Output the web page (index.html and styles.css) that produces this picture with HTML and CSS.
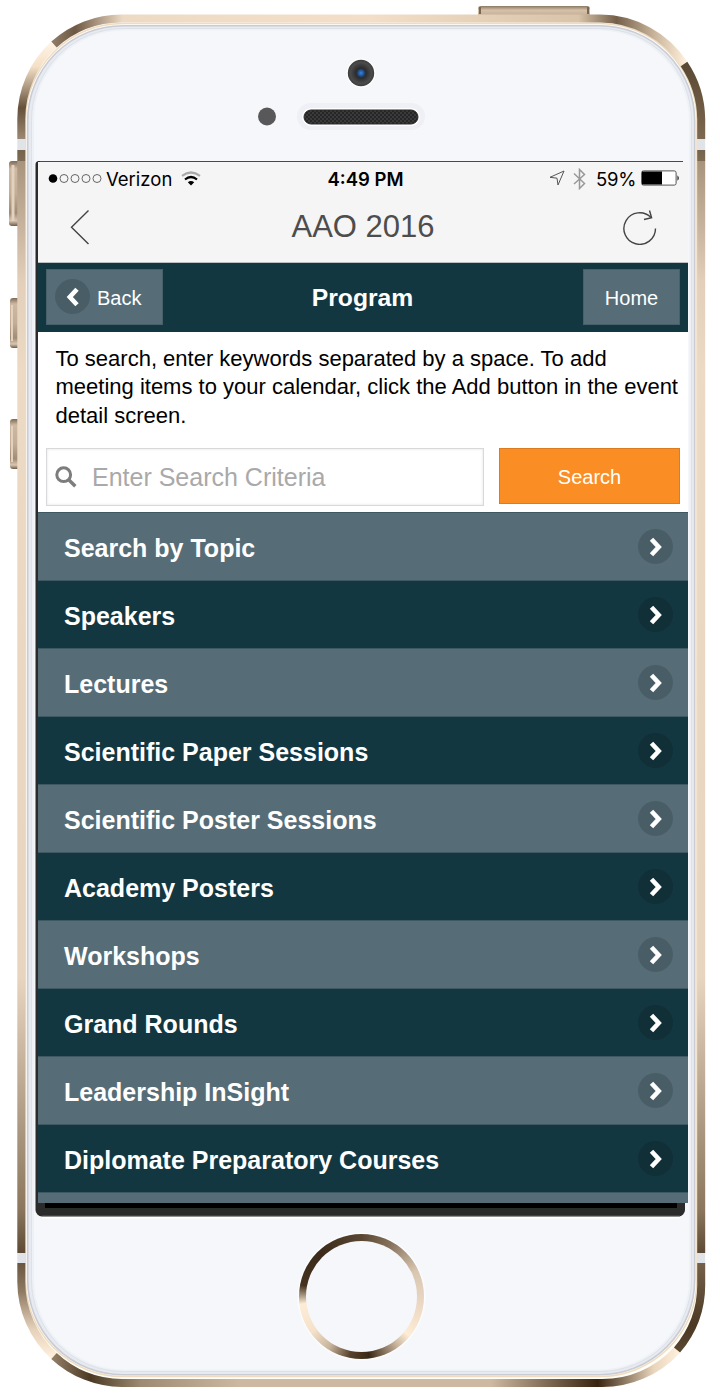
FILE: index.html
```html
<!DOCTYPE html>
<html lang="en">
<head>
    <meta charset="UTF-8">
    <meta name="viewport" content="width=device-width, initial-scale=1.0">
    <title>AAO 2016 - Program</title>
    <link rel="stylesheet" href="styles.css">
</head>
<body>
    <div class="phone">
        <!-- phone body -->
        <svg class="shell" width="720" height="1400" viewBox="0 0 720 1400" fill="none">
            <defs>
                <linearGradient id="side" gradientUnits="userSpaceOnUse" x1="0" y1="150" x2="0" y2="1253">
                    <stop offset="0" stop-color="#75634c"/>
                    <stop offset=".01" stop-color="#7d6b54"/>
                    <stop offset=".0101" stop-color="#a8947d"/>
                    <stop offset=".12" stop-color="#e3cfba"/>
                    <stop offset=".2" stop-color="#ecdac5"/>
                    <stop offset=".75" stop-color="#e8d5c0"/>
                    <stop offset=".96" stop-color="#8c775e"/>
                    <stop offset="1" stop-color="#5e4a34"/>
                </linearGradient>
                <linearGradient id="top" gradientUnits="userSpaceOnUse" x1="53" y1="0" x2="686" y2="0">
                    <stop offset="0" stop-color="#8f7b66"/>
                    <stop offset=".035" stop-color="#6e5944"/>
                    <stop offset=".11" stop-color="#eddac5"/>
                    <stop offset=".5" stop-color="#f3dfc9"/>
                    <stop offset=".83" stop-color="#d9c3a9"/>
                    <stop offset=".89" stop-color="#74604a"/>
                    <stop offset=".95" stop-color="#c9b49b"/>
                    <stop offset="1" stop-color="#fff0dc"/>
                </linearGradient>
                <linearGradient id="bottom" gradientUnits="userSpaceOnUse" x1="53" y1="0" x2="679" y2="0">
                    <stop offset="0" stop-color="#927d65"/>
                    <stop offset=".06" stop-color="#4b3923"/>
                    <stop offset=".14" stop-color="#9d8a72"/>
                    <stop offset=".3" stop-color="#cdb9a1"/>
                    <stop offset=".7" stop-color="#cdb9a1"/>
                    <stop offset=".87" stop-color="#38240f"/>
                    <stop offset=".96" stop-color="#ead5bd"/>
                    <stop offset="1" stop-color="#fff0dc"/>
                </linearGradient>
                <linearGradient id="cornerTL" gradientUnits="userSpaceOnUse" x1="0" y1="42" x2="0" y2="139">
                    <stop offset="0" stop-color="#fff4e6"/>
                    <stop offset=".25" stop-color="#f5e0c8"/>
                    <stop offset=".68" stop-color="#65513a"/>
                    <stop offset="1" stop-color="#9d8973"/>
                </linearGradient>
                <linearGradient id="cornerTR" gradientUnits="userSpaceOnUse" x1="0" y1="62" x2="0" y2="139">
                    <stop offset="0" stop-color="#5a4833"/>
                    <stop offset=".6" stop-color="#6f5b44"/>
                    <stop offset="1" stop-color="#7d6952"/>
                </linearGradient>
                <linearGradient id="cornerBL" gradientUnits="userSpaceOnUse" x1="0" y1="1263" x2="0" y2="1358">
                    <stop offset="0" stop-color="#6b573f"/>
                    <stop offset=".3" stop-color="#8f7a63"/>
                    <stop offset=".7" stop-color="#e6d1ba"/>
                    <stop offset="1" stop-color="#fff0dc"/>
                </linearGradient>
                <linearGradient id="cornerBR" gradientUnits="userSpaceOnUse" x1="0" y1="1263" x2="0" y2="1352">
                    <stop offset="0" stop-color="#75614a"/>
                    <stop offset=".7" stop-color="#4b3924"/>
                    <stop offset="1" stop-color="#5a4731"/>
                </linearGradient>
                <linearGradient id="key" x1="0" y1="0" x2="0" y2="1">
                    <stop offset="0" stop-color="#7d6b58"/>
                    <stop offset=".12" stop-color="#cdb9a3"/>
                    <stop offset=".5" stop-color="#c2ad96"/>
                    <stop offset=".8" stop-color="#a08b74"/>
                    <stop offset=".92" stop-color="#d9c6b2"/>
                    <stop offset="1" stop-color="#6e5c49"/>
                </linearGradient>
                <linearGradient id="power" x1="0" y1="0" x2="0" y2="1">
                    <stop offset="0" stop-color="#8c7964"/>
                    <stop offset=".35" stop-color="#d6c1aa"/>
                    <stop offset="1" stop-color="#b9a48c"/>
                </linearGradient>
                <radialGradient id="lens">
                    <stop offset="0" stop-color="#3a86d6"/>
                    <stop offset=".24" stop-color="#1c4c8c"/>
                    <stop offset=".36" stop-color="#2a2b2e"/>
                    <stop offset=".8" stop-color="#4c4b4b"/>
                    <stop offset="1" stop-color="#3d3c3c"/>
                </radialGradient>
                <pattern id="mesh" width="4" height="4" patternUnits="userSpaceOnUse">
                    <rect width="4" height="4" fill="#262626"/>
                    <circle cx="1" cy="1" r=".7" fill="#5c5c5c"/>
                    <circle cx="3" cy="3" r=".7" fill="#5c5c5c"/>
                </pattern>
            </defs>

            <!-- side keys -->
            <rect x="9" y="161" width="12" height="65" rx="3" fill="url(#key)"/>
            <path d="M13 165v56" stroke="#e3d1bd" stroke-width="3"/>
            <rect x="10" y="298" width="10" height="50" rx="3" fill="url(#key)"/>
            <path d="M12 305v36" stroke="#e3d1bd" stroke-width="2"/>
            <rect x="10" y="419" width="10" height="50" rx="3" fill="url(#key)"/>
            <path d="M12 426v36" stroke="#e3d1bd" stroke-width="2"/>
            <rect x="478" y="6" width="112" height="12" rx="3" fill="url(#power)"/>
            <path d="M480 7v7M588 7v7" stroke="#7a6753" stroke-width="2"/>

            <!-- face -->
            <rect x="21" y="18" width="681" height="1366" rx="101" fill="#fffdf8"/>
            <rect x="25.5" y="23.5" width="671.5" height="1353" rx="97" fill="#fff" stroke="#efdcc0" stroke-width="1.5"/>
            <rect x="27.7" y="25.7" width="667" height="1349" rx="95" fill="#e7eaf0" stroke="#c9ccd2" stroke-width="1.6"/>
            <rect x="31.5" y="28.5" width="660" height="1343" rx="92" fill="#eef1f6" stroke="#dde1e8"/>
            <rect x="34" y="30.5" width="655" height="1339" rx="90" fill="#f5f7fa"/>

            <!-- metal band -->
            <g stroke-width="8">
                <path d="M21.3 150V1253M701.2 150V1253" stroke="url(#side)"/>
                <path d="M21.3 139V119A101 101 0 0 1 54 44.5" stroke="url(#cornerTL)"/>
                <path d="M54 44.5A101 101 0 0 1 122 18.5H600A101 101 0 0 1 684 64" stroke="url(#top)"/>
                <path d="M684 64A101 101 0 0 1 701.2 119V139" stroke="url(#cornerTR)"/>
                <path d="M21.3 1263V1282A101 101 0 0 0 54 1356" stroke="url(#cornerBL)"/>
                <path d="M54 1356A101 101 0 0 0 122 1383H600A101 101 0 0 0 677 1350" stroke="url(#bottom)"/>
                <path d="M677 1350A101 101 0 0 0 701.2 1282V1263" stroke="url(#cornerBR)"/>
                <path d="M21.3 139v11M701.2 139v11M21.3 1253v10M701.2 1253v10" stroke="#e0e3e8"/>
            </g>

            <!-- camera, sensor, speaker -->
            <circle cx="361" cy="73" r="14.5" fill="#fff"/>
            <circle cx="361" cy="73" r="13.2" fill="url(#lens)"/>
            <circle cx="267" cy="116.5" r="9" fill="#58585a"/>
            <rect x="297" y="103" width="128" height="27" rx="13.5" fill="#eef0f5"/>
            <rect x="302" y="108" width="118" height="18" rx="9" fill="#fff"/>
            <rect x="304" y="110" width="114" height="14" rx="7" fill="url(#mesh)" stroke="#2a2a2a"/>

            <!-- glass edge round the screen -->
            <path d="M38 161.5H683" stroke="#4a4a4a"/>
            <path d="M40 161h-1a3.500 3.500 0 0 0-3.500 3.500V1210a6.500 6.500 0 0 0 6.500 6.500H678.500a6.500 6.500 0 0 0 6.500-6.500V1200H40z" fill="#2b2b2c"/>
            <path d="M45 1203H677v5H45z" fill="#000"/>
            <path d="M42 1217.500H680" stroke="#fff" stroke-width="2"/>
            <path d="M42 1216.200H680" stroke="#7a7777"/>
        </svg>

        <div class="screen">
            <div class="status-bar">
                <div class="status-left">
                    <svg width="54" height="12" viewBox="0 0 54 12" fill="none" stroke="#666">
                        <circle cx="5" cy="5.500" r="4.300" fill="#000" stroke="none"/>
                        <circle cx="16" cy="5.500" r="4"/>
                        <circle cx="27" cy="5.500" r="4"/>
                        <circle cx="38" cy="5.500" r="4"/>
                        <circle cx="49" cy="5.500" r="4"/>
                    </svg>
                    <span class="carrier">Verizon</span>
                    <svg width="20" height="17" viewBox="0 0 20 17" fill="none" stroke-width="2.200">
                        <path d="M1 4.800Q10 -1.800 19 4.800" stroke="#aaa"/>
                        <path d="M4 8.500Q10 3.500 16 8.500" stroke="#000"/>
                        <path d="M6.800 11.300Q10 8.800 13.200 11.300L10 14.500z" fill="#000"/>
                    </svg>
                </div>
                <div class="time">4:49 PM</div>
                <div class="status-right">
                    <svg width="16" height="18" viewBox="0 0 16 18" fill="none" stroke="#555" stroke-linejoin="round">
                        <path d="M15 1L1 7.300L8 8.200L9 15z"/>
                    </svg>
                    <svg class="bluetooth" width="13" height="22" viewBox="0 0 13 22" fill="none" stroke="#999" stroke-width="1.500">
                        <path d="M1 5.500L11.500 15.500L6.500 20.500V1.500L11.500 6.500L1 16"/>
                    </svg>
                    <span class="percent">59%</span>
                    <svg class="battery" width="39" height="18" viewBox="0 0 39 18">
                        <rect x=".6" y=".9" width="34.500" height="14.200" rx="1.800" fill="#fff" stroke="#555"/>
                        <path d="M1 1.500h20v13H1z"/>
                        <path d="M36.500 5.200q2.500 2.800 0 5.600z"/>
                    </svg>
                </div>
            </div>

            <div class="nav-bar">
                <svg width="20" height="36" viewBox="0 0 20 36" fill="none" stroke="#444" stroke-width="1.400">
                    <path d="M18.500 1.500L1.500 18.300L18.500 35"/>
                </svg>
                <div class="nav-title">AAO 2016</div>
                <svg width="34" height="36" viewBox="0 0 34 36" fill="none" stroke="#444" stroke-width="1.400">
                    <path d="M32.500 19.500A15.800 15.800 0 1 1 28 8.500"/>
                    <path d="M26.500 1.500L28.600 8.700L21 10.500"/>
                </svg>
            </div>

            <div class="header">
                <button class="btn back">
                    <span class="disc">
                        <svg width="14" height="20" viewBox="0 0 14 20" fill="none" stroke="#fff" stroke-width="4.600"><path d="M11 2.200L3.800 10L11 17.800"/></svg>
                    </span>
                    <span class="label">Back</span>
                </button>
                <h1>Program</h1>
                <button class="btn home"><span class="label">Home</span></button>
            </div>

            <p class="intro">To search, enter keywords separated by a space. To add meeting items to your calendar, click the Add button in the event detail screen.</p>

            <div class="search">
                <div class="search-box">
                    <svg width="22" height="22" viewBox="0 0 22 22" fill="none" stroke="#7d7d7d">
                        <circle cx="8.700" cy="8.700" r="6.900" stroke-width="3"/>
                        <path d="M13.500 13.500L20.300 20.300" stroke-width="3.400"/>
                    </svg>
                    <input type="text" placeholder="Enter Search Criteria">
                </div>
                <button class="search-btn">Search</button>
            </div>

            <ul class="menu">
                <li><span>Search by Topic</span><span class="disc"><svg width="14" height="20"><use href="#arrow"/></svg></span></li>
                <li><span>Speakers</span><span class="disc"><svg width="14" height="20"><use href="#arrow"/></svg></span></li>
                <li><span>Lectures</span><span class="disc"><svg width="14" height="20"><use href="#arrow"/></svg></span></li>
                <li><span>Scientific Paper Sessions</span><span class="disc"><svg width="14" height="20"><use href="#arrow"/></svg></span></li>
                <li><span>Scientific Poster Sessions</span><span class="disc"><svg width="14" height="20"><use href="#arrow"/></svg></span></li>
                <li><span>Academy Posters</span><span class="disc"><svg width="14" height="20"><use href="#arrow"/></svg></span></li>
                <li><span>Workshops</span><span class="disc"><svg width="14" height="20"><use href="#arrow"/></svg></span></li>
                <li><span>Grand Rounds</span><span class="disc"><svg width="14" height="20"><use href="#arrow"/></svg></span></li>
                <li><span>Leadership InSight</span><span class="disc"><svg width="14" height="20"><use href="#arrow"/></svg></span></li>
                <li><span>Diplomate Preparatory Courses</span><span class="disc"><svg width="14" height="20"><use href="#arrow"/></svg></span></li>
                <li></li>
            </ul>
        </div>

        <div class="home-button"></div>
    </div>

    <svg class="symbols" width="0" height="0">
        <symbol id="arrow" viewBox="0 0 14 20">
            <path d="M2.500 2.200L9.700 10L2.500 17.800" fill="none" stroke="#fff" stroke-width="4.600"/>
        </symbol>
    </svg>
</body>
</html>
```
FILE: styles.css
```css
* {
    box-sizing: border-box;
}
body {
    margin: 0;
    background-color: #fff;
    font-family: "Liberation Sans", Arial, sans-serif;
}
svg {
    display: block;
    flex-shrink: 0;
}
button {
    font-family: inherit;
    font-size: 20px;
    color: #fff;
    padding: 0;
    cursor: pointer;
}
.phone {
    position: relative;
    width: 720px;
    height: 1400px;
    padding: 162px 32px 0 38px;
    overflow: hidden;
}
.shell {
    position: absolute;
    top: 0;
    left: 0;
}
.symbols {
    position: absolute;
}
.screen {
    position: relative;
    height: 1041px;
    overflow: hidden;
    background-color: #fff;
}
.status-bar {
    display: grid;
    grid-template-columns: 1fr auto 1fr;
    align-items: center;
    height: 34px;
    padding: 0 8px 0 10px;
    background-color: #f5f5f5;
    font-family: Inter, sans-serif;
    font-size: 18.5px;
    color: #000;
}
.status-left, .status-right {
    display: flex;
    align-items: center;
}
.status-right {
    justify-content: flex-end;
}
.carrier {
    margin: 0 9px 0 4px;
}
.time {
    margin-left: 3px;
    font-weight: 600;
}
.bluetooth {
    margin: 0 10px 0 8px;
}
.percent {
    letter-spacing: -0.3px;
}
.battery {
    margin-left: 5px;
}
.nav-bar {
    display: flex;
    justify-content: space-between;
    align-items: center;
    height: 67px;
    padding: 0 31px 5px 32px;
    background-color: #f5f5f5;
    border-bottom: 1px solid #b8c0c4;
}
.nav-title {
    margin-left: 13px;
    font-size: 31px;
    color: #4d4d4d;
}
.header {
    display: grid;
    grid-template-columns: 117px 1fr 97px;
    align-items: center;
    height: 69px;
    padding: 0 8px 2px;
    background-color: #133741;
}
.header h1 {
    margin: 2px 0 0;
    padding-right: 21px;
    font-size: 24.7px;
    text-align: center;
    color: #fff;
}
.btn {
    display: flex;
    align-items: center;
    justify-content: center;
    height: 56px;
    background-color: #566d78;
    border: 1px solid #476069;
}
.back {
    justify-content: flex-start;
    padding-left: 8px;
    gap: 7px;
}
.label {
    padding-top: 3px;
}
.disc {
    display: flex;
    align-items: center;
    justify-content: center;
    width: 35px;
    height: 35px;
    border-radius: 50%;
    background-color: rgba(0, 0, 0, 0.14);
}
.intro {
    height: 116px;
    margin: 0;
    padding: 13px 0 0 17.500px;
    font-size: 22px;
    line-height: 28.300px;
    color: #000;
}
.search {
    display: flex;
    justify-content: space-between;
    height: 64px;
    padding: 0 8px;
}
.search-box {
    display: flex;
    align-items: center;
    width: 438px;
    height: 58px;
    padding-left: 8px;
    border: 1px solid #d9d9d9;
    box-shadow: inset 0 0 3px rgba(0, 0, 0, 0.12);
}
.search-box input {
    flex: 1;
    min-width: 0;
    padding: 0 0 0 15px;
    border: none;
    outline: none;
    background: none;
    font-family: inherit;
    font-size: 25px;
}
.search-box input::placeholder {
    color: #a9a9a9;
}
.search-btn {
    width: 181px;
    height: 56px;
    padding-top: 2px;
    background-color: #fa8d24;
    border: 1px solid #dd7c1f;
}
.menu {
    list-style: none;
    margin: 0;
    padding: 0;
}
.menu li {
    display: flex;
    justify-content: space-between;
    align-items: center;
    height: 68.050px;
    padding: 0 15px 0 26px;
    background-color: #133741;
    border-top: 1px solid #3f5963;
    font-size: 25px;
    font-weight: bold;
    color: #fff;
}
.menu li span:first-child {
    padding-top: 3px;
}
.menu li:nth-child(odd) {
    background-color: #566d78;
}
.menu .disc {
    flex-shrink: 0;
}
.home-button {
    position: relative;
    width: 125px;
    height: 125px;
    margin: 31px 0 0 261px;
    border-radius: 50%;
    background: conic-gradient(#5a4733, #85715b 8%, #d9c6b1 18%, #eddac6 28%, #fdecd6 36%, #c9b49c 40%, #3a2817 48%, #56422c 53%, #c8b49d 59%, #f5e1ca 65%, #fdecd6 73%, #45321f 78%, #3b2a1a 88%, #5a4733);
    box-shadow: 0 0 2px 1px #fff;
}
.home-button::after {
    content: "";
    position: absolute;
    inset: 7px;
    border-radius: 50%;
    background-color: #f5f7fa;
}
```
